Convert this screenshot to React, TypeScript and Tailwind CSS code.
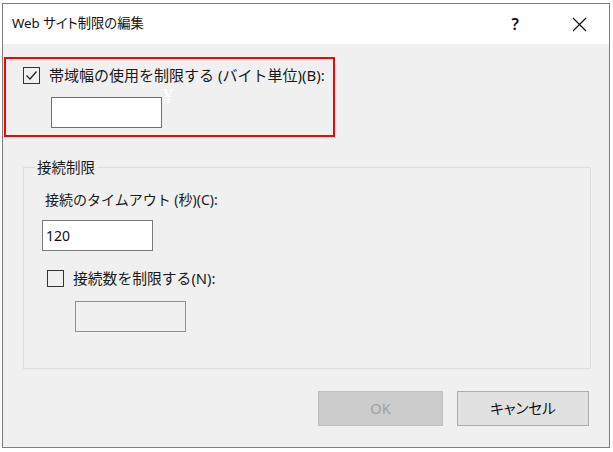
import React from "react";

const font = "[font-family:'Noto_Sans','Noto_Sans_CJK_JP',sans-serif]";

function CheckBox({ checked }: { checked: boolean }) {
  return (
    <div className="w-[17px] h-[17px] border border-[#333333] bg-[#f0f0f0] flex items-center justify-center shrink-0">
      {checked && (
        <svg width="13" height="13" viewBox="0 0 13 13">
          <path d="M1.5 6.5 L5 10 L11.5 2.5" fill="none" stroke="#222" strokeWidth="1.3" />
        </svg>
      )}
    </div>
  );
}

export default function App() {
  return (
    <div className={`w-[613px] h-[452px] bg-white pt-[3px] pl-[2px] overflow-hidden ${font}`}>
      <div className="w-[608px] h-[445px] border border-[#7e7e7e] flex flex-col bg-[#f0f0f0]">
        {/* title bar */}
        <div className="h-[40px] bg-white flex items-center pl-[9px] pr-[22px] shrink-0">
          <span className="text-[13.3px] text-[#111] leading-none [font-feature-settings:'palt']">Web サイト制限の編集</span>
          <span className="ml-auto text-[16px] text-[#111] font-semibold leading-none mr-[53px]">?</span>
          <svg width="15" height="15" viewBox="0 0 15 15">
            <path d="M1 1 L14 14 M14 1 L1 14" stroke="#111" strokeWidth="1.2" />
          </svg>
        </div>

        {/* red annotated box */}
        <div className="relative mt-[13px] ml-[1px] w-[331px] h-[80px] border-2 border-[#ff0000] pt-[8px] pl-[17px]">
          <div className="flex items-center">
            <CheckBox checked />
            <span className="ml-[9px] text-[15px] text-[#1a1a1a] leading-[17px] whitespace-nowrap">
              帯域幅の使用を制限する (バイト単位)(B):
            </span>
          </div>
          <div className="mt-[13px] ml-[28px] w-[111px] h-[31px] border border-[#3f7cb6] bg-white" />
          <span className="absolute left-[157px] top-[27px] text-[20px] leading-none text-white [font-family:'Liberation_Serif',serif]">¥</span>
        </div>

        {/* group box */}
        <fieldset className="mt-[20px] ml-[20px] w-[568px] border border-[#dcdcdc] pl-[18px] pb-[36px]">
          <legend className="ml-[-7px] px-[2px] text-[14.5px] leading-[20px] text-[#1a1a1a]">接続制限</legend>
          <div className="mt-[13px] pl-[3px] text-[14px] leading-[20px] text-[#1a1a1a]">接続のタイムアウト (秒)(C):</div>
          <div className="mt-[10px] w-[111px] h-[31px] border border-[#7a7a7a] bg-white flex items-center pl-[3px] text-[14px] text-[#111]">
            120
          </div>
          <div className="mt-[19px] ml-[5px] flex items-center">
            <CheckBox checked={false} />
            <span className="ml-[9px] text-[14.8px] leading-[17px] text-[#1a1a1a]">接続数を制限する(N):</span>
          </div>
          <div className="mt-[14px] ml-[33px] w-[111px] h-[31px] border border-[#8f8f8f] bg-[#f0f0f0]" />
        </fieldset>

        {/* buttons */}
        <div className="mt-[22px] flex justify-end pr-[20px] gap-[14px]">
          <div className="w-[125px] h-[35px] bg-[#cccccc] border border-[#bfbfbf] flex items-center justify-center text-[14.5px] text-[#a0a0a0]">
            OK
          </div>
          <div className="w-[132px] h-[35px] bg-[#e1e1e1] border border-[#adadad] flex items-center justify-center text-[14.5px] text-[#111] [font-feature-settings:'palt']">
            キャンセル
          </div>
        </div>
      </div>
    </div>
  );
}
